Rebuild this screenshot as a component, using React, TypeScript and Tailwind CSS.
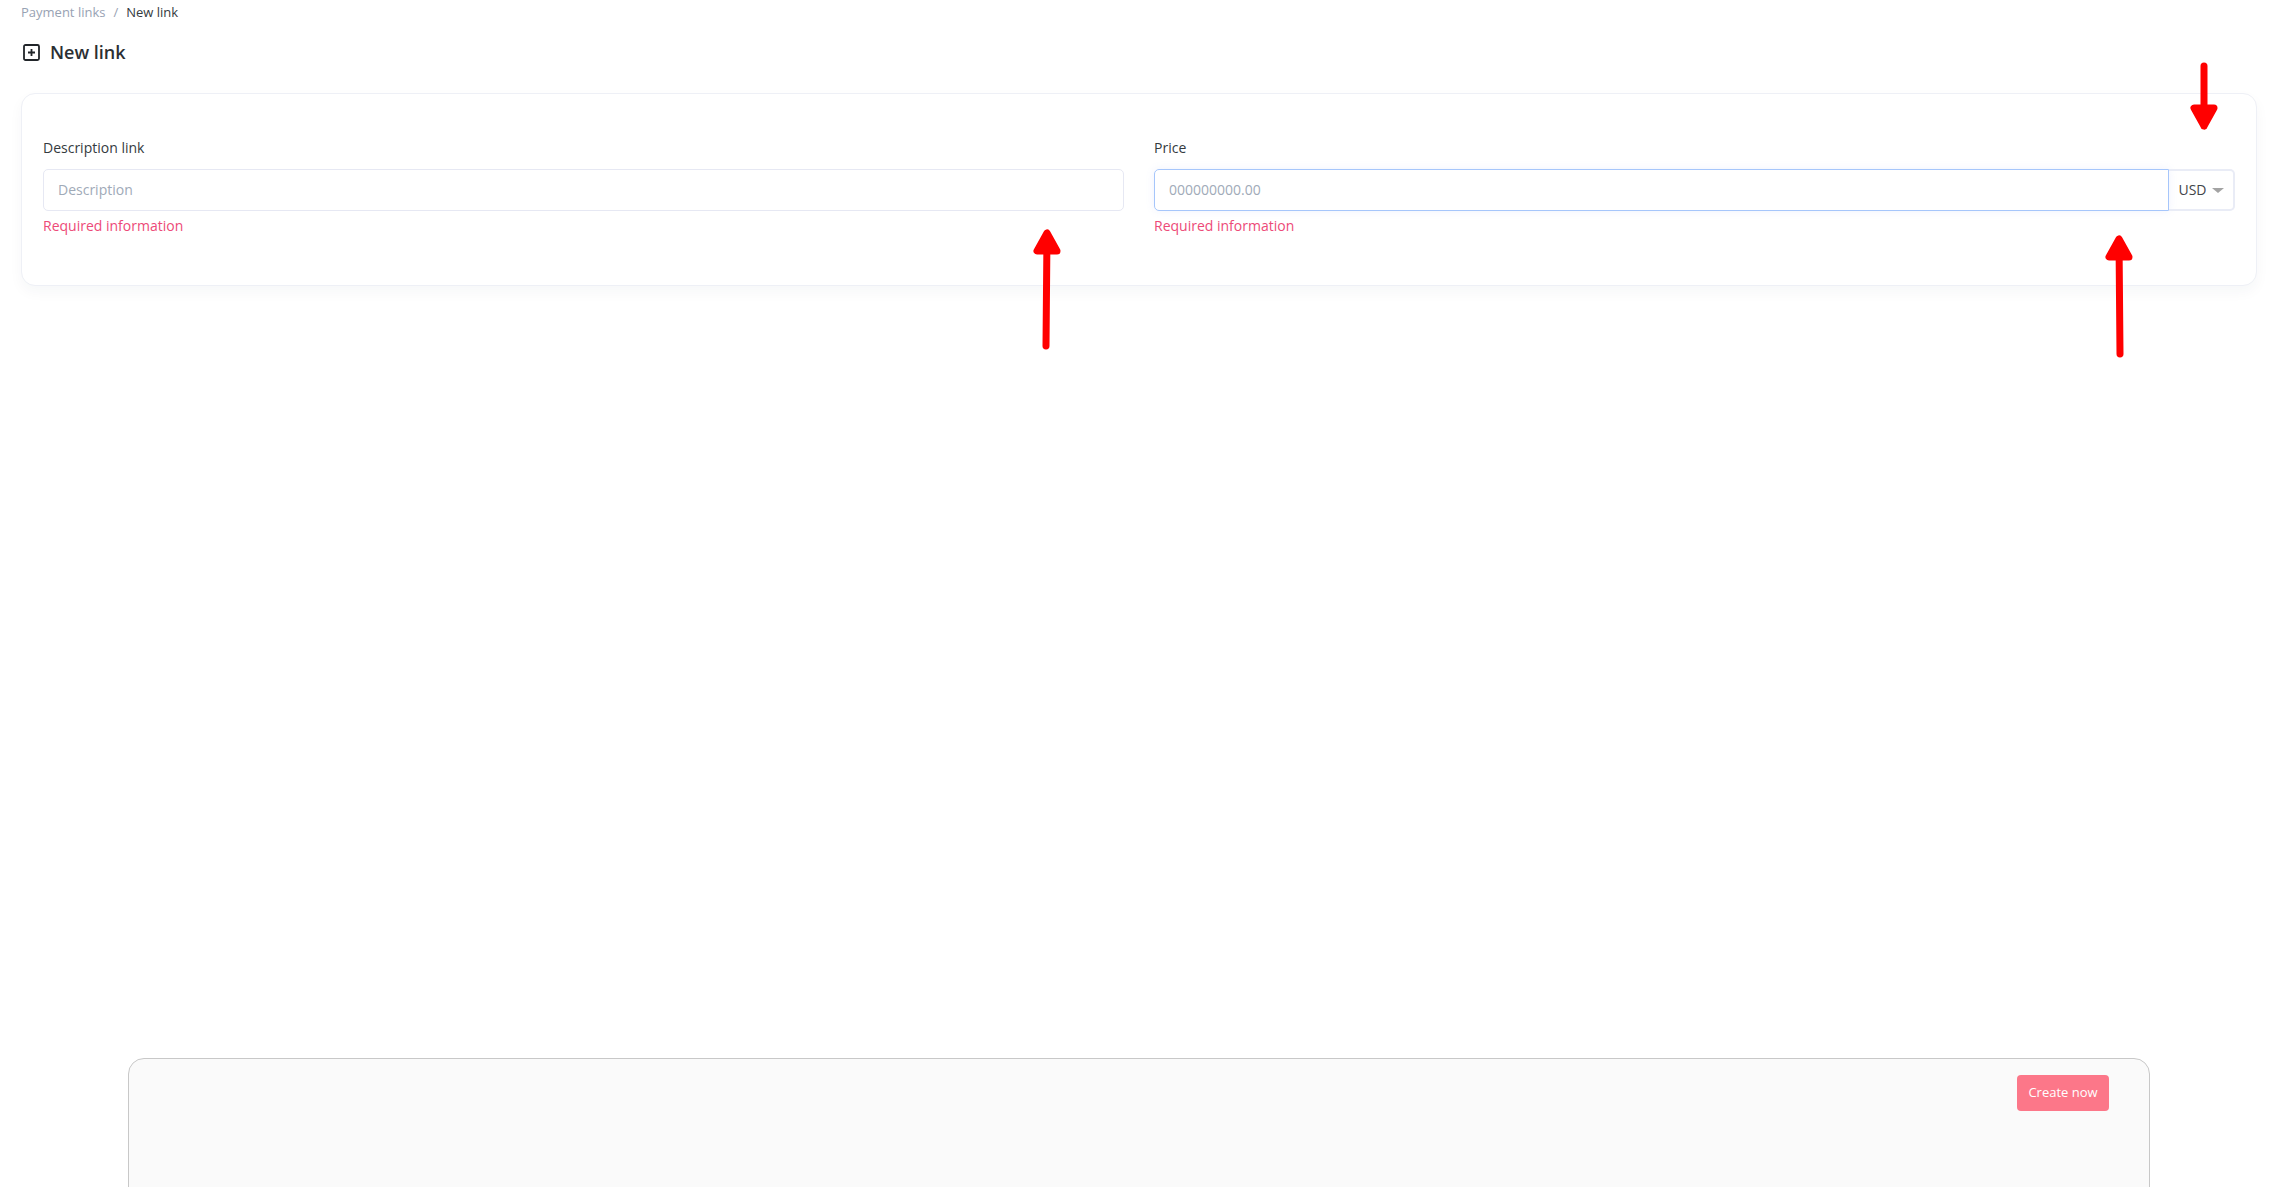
function Arrow({ className, d }: { className: string; d: string }) {
  return (
    <svg className={className} viewBox="0 0 40 130" fill="none">
      <path d={d} stroke="#ff0000" strokeWidth="7" strokeLinecap="round" strokeLinejoin="round" fill="#ff0000" />
    </svg>
  );
}

export default function App() {
  return (
    <div className="relative h-[1187px] overflow-hidden bg-white font-['Open_Sans',sans-serif] text-[14px] text-[#343a40]">
      <div className="flex h-[26px] items-center pl-[21px] text-[13px]">
        <span className="text-[#98a2b3]">Payment links</span>
        <span className="mx-[8px] text-[#98a2b3]">/</span>
        <span className="text-[#343a40]">New link</span>
      </div>

      <div className="mt-[11px] flex h-[30px] items-center pl-[23px]">
        <svg className="h-[17px] w-[17px] text-[#212529]" viewBox="0 0 17 17" fill="none" stroke="currentColor">
          <rect x="1" y="1" width="15" height="15" rx="1.5" strokeWidth="1.8" />
          <path d="M8.5 5v7M5 8.5h7" strokeWidth="1.8" />
        </svg>
        <h1 className="ml-[10px] text-[18px] font-semibold text-[#2b2f33]">New link</h1>
      </div>

      <div className="mx-[12px] mt-[26px] ml-[21px] h-[193px] rounded-[14px] border border-[#eef0f6] bg-white px-[21px] pt-[41px] shadow-[0_6px_14px_rgba(30,40,80,0.04)]">
        <div className="flex gap-[30px]">
          <div className="w-[1081px]">
            <label className="block h-[34px] leading-[26px]">Description link</label>
            <input
              placeholder="Description"
              className="h-[42px] w-full rounded-[5px] border border-[#e6e8f3] px-[14px] pb-[2px] placeholder:text-[#a0aab8] focus:outline-none"
            />
            <p className="mt-[4px] text-[#ed4a78]">Required information</p>
          </div>
          <div className="flex-1">
            <label className="block h-[34px] leading-[26px]">Price</label>
            <div className="flex h-[42px]">
              <input
                placeholder="000000000.00"
                className="h-full w-[1015px] rounded-l-[5px] border border-[#a6c6fb] px-[14px] pb-[2px] shadow-[0_0_8px_rgba(120,150,250,0.12)] placeholder:text-[#a0aab8] focus:outline-none"
              />
              <button className="flex flex-1 items-center justify-center gap-[5px] rounded-r-[5px] border-2 border-l-0 border-[#e9ecf6] pb-[1px] text-[#3f4449]">
                USD
                <span className="mt-[2px] h-0 w-0 border-x-[6px] border-t-[5px] border-x-transparent border-t-[#a3a3a3]" />
              </button>
            </div>
            <p className="mt-[4px] text-[#ed4a78]">Required information</p>
          </div>
        </div>
      </div>

      <div className="mx-[128px] mt-[772px] mr-[119px] flex h-[200px] justify-end rounded-t-[16px] border border-[#c8c8c8] bg-[#fafafa] pt-[16px] pr-[40px]">
        <button className="h-[36px] w-[92px] rounded-[4px] bg-[#fc7789] pb-[1px] text-[13px] text-white">Create now</button>
      </div>

      {/* red annotation arrows drawn over the screenshot */}
      <Arrow className="absolute left-[1026px] top-[224px] h-[130px] w-[40px]" d="M20 122L21 10M21 9L11 27H31Z" />
      <Arrow className="absolute left-[2099px] top-[230px] h-[130px] w-[40px]" d="M21 124L20 10M20 9L10 27H30Z" />
      <Arrow className="absolute left-[2184px] top-[60px] h-[130px] w-[40px]" d="M20 6L20 66M20 66L10 48H30Z" />
    </div>
  );
}
